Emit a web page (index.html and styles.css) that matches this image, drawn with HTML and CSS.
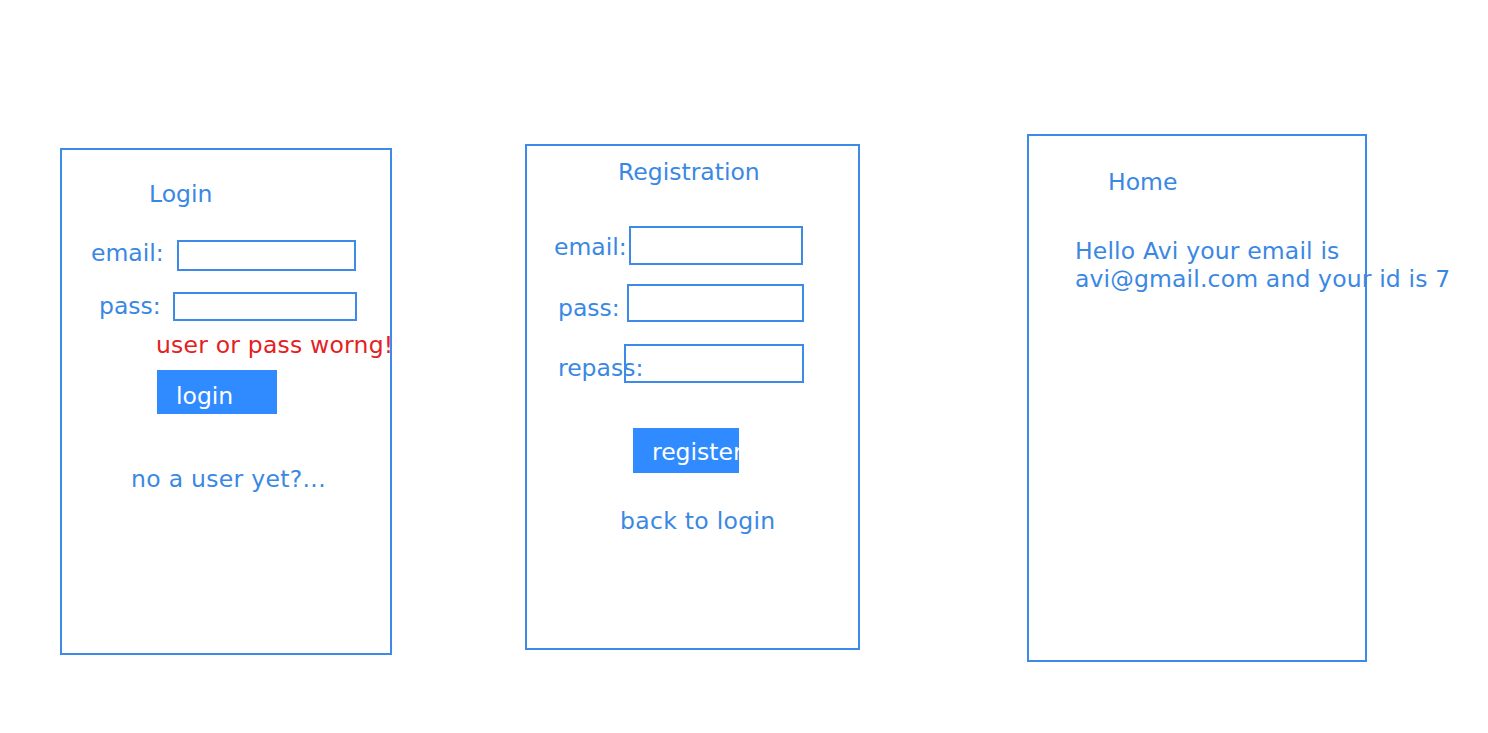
FILE: index.html
```html
<!DOCTYPE html>
<html lang="en">
<head>
<meta charset="utf-8">
<title>Wireframes</title>
<link rel="stylesheet" href="styles.css">
</head>
<body>
<main class="canvas">
  <section class="frame frame-login">
    <div class="title t-login">Login</div>
    <div class="row r-email">
      <span class="label">email:</span>
      <span class="input"></span>
    </div>
    <div class="row r-pass">
      <span class="label">pass:</span>
      <span class="input"></span>
    </div>
    <div class="error">user or pass worng!</div>
    <div class="btn btn-login">login</div>
    <div class="link l-signup">no a user yet?...</div>
  </section>

  <section class="frame frame-reg">
    <div class="title t-reg">Registration</div>
    <div class="row r-email">
      <span class="label">email:</span>
      <span class="input"></span>
    </div>
    <div class="row r-pass">
      <span class="label">pass:</span>
      <span class="input"></span>
    </div>
    <div class="row r-repass">
      <span class="label">repass:</span>
      <span class="input"></span>
    </div>
    <div class="btn btn-reg">register</div>
    <div class="link l-back">back to login</div>
  </section>

  <section class="frame frame-home">
    <div class="title t-home">Home</div>
    <p class="greeting">Hello Avi your email is<br>avi@gmail.com and your id is 7</p>
  </section>
</main>
</body>
</html>
```
FILE: styles.css
```css
html, body {
  margin: 0;
  padding: 0;
  background: #ffffff;
}

.canvas {
  position: relative;
  width: 1488px;
  height: 733px;
  overflow: hidden;
  font-family: "DejaVu Sans", Verdana, sans-serif;
  font-size: 23.5px;
  line-height: 28px;
  color: #3a88e3;
}

.frame {
  position: absolute;
  box-sizing: border-box;
  border: 2px solid #3d8ae8;
  display: flex;
  flex-direction: column;
  align-items: flex-start;
}

.frame-login { left: 60px; top: 148px; width: 332px; height: 507px; }
.frame-reg   { left: 525px; top: 144px; width: 335px; height: 506px; }
.frame-home  { left: 1027px; top: 134px; width: 340px; height: 528px; }

.title, .link, .error, .label, .greeting {
  white-space: nowrap;
}

.link { letter-spacing: 0.3px; }

.row {
  display: flex;
  align-items: flex-start;
}

.label {
  display: block;
  flex: none;
}

.input {
  display: block;
  flex: none;
  box-sizing: border-box;
  border: 2px solid #3d8ae8;
  background: transparent;
  position: relative;
}

/* Login frame */
.t-login { margin: 30px 0 0 87px; }
.frame-login .r-email { margin: 31px 0 0 29px; }
.frame-login .r-email .label { width: 86px; margin-top: 0; }
.frame-login .r-email .input { width: 179px; height: 31px; margin-top: 1px; }
.frame-login .r-pass { margin: 21px 0 0 37px; }
.frame-login .r-pass .label { width: 74px; }
.frame-login .r-pass .input { width: 184px; height: 29px; }

.error {
  margin: 10px 0 0 94px;
  color: #e4211f;
  position: relative;
  letter-spacing: 0.2px;
}

.btn {
  box-sizing: border-box;
  background: #2f8bff;
  color: #ffffff;
  height: 44px;
  padding: 10px 0 0 19px;
  overflow: hidden;
  white-space: nowrap;
}

.btn-login { width: 120px; margin: 11px 0 0 95px; padding-top: 12px; }
.l-signup { margin: 51px 0 0 69px; }

/* Registration frame */
.t-reg { margin: 12px 0 0 91px; }
.frame-reg .r-email { margin: 40px 0 0 27px; }
.frame-reg .r-email .label { width: 75px; margin-top: 7px; }
.frame-reg .r-email .input { width: 174px; height: 39px; }
.frame-reg .r-pass { margin: 19px 0 0 31px; }
.frame-reg .r-pass .label { width: 69px; margin-top: 10px; }
.frame-reg .r-pass .input { width: 177px; height: 38px; }
.frame-reg .r-repass { margin: 22px 0 0 31px; }
.frame-reg .r-repass .label { width: 66px; margin-top: 10px; }
.frame-reg .r-repass .input { width: 180px; height: 39px; }

.btn-reg { width: 106px; height: 45px; margin: 45px 0 0 106px; padding-left: 19px; }
.l-back { margin: 34px 0 0 93px; }

/* Home frame */
.t-home { margin: 32px 0 0 79px; }
.greeting { margin: 41px 0 0 46px; letter-spacing: 0.15px; }
```
